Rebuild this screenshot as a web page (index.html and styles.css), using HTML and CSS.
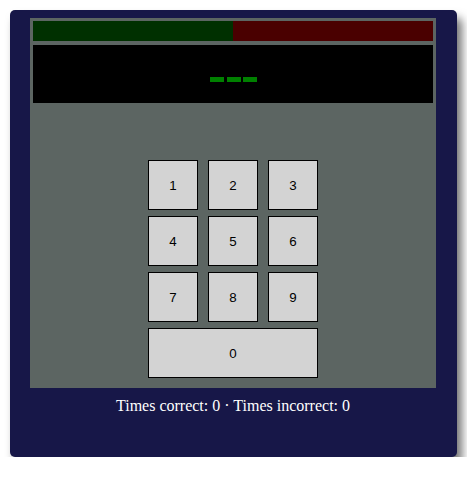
FILE: index.html
```html
<!DOCTYPE html>
<html>
<head>
<meta charset="utf-8">
<link rel="stylesheet" href="styles.css">
</head>
<body>
<div class="card">
  <div class="panel">
    <div class="bar">
      <div class="bar-good"></div>
      <div class="bar-bad"></div>
    </div>
    <div class="display">
      <span class="dash"></span><span class="dash"></span><span class="dash"></span>
    </div>
    <div class="keypad">
      <button class="key">1</button>
      <button class="key">2</button>
      <button class="key">3</button>
      <button class="key">4</button>
      <button class="key">5</button>
      <button class="key">6</button>
      <button class="key">7</button>
      <button class="key">8</button>
      <button class="key">9</button>
      <button class="key key-wide">0</button>
    </div>
  </div>
  <p class="score">Times correct: 0 · Times incorrect: 0</p>
</div>
</body>
</html>
```
FILE: styles.css
```css
html, body {
  margin: 0;
  padding: 0;
  background: #ffffff;
}
.card {
  margin: 10px 0 0 10px;
  width: 447px;
  height: 447px;
  box-sizing: border-box;
  padding: 8px 21px 0 20px;
  background: #171748;
  border-radius: 5px;
  box-shadow: 5px 8px 10px rgba(0, 0, 0, 0.55);
}
.panel {
  width: 406px;
  height: 370px;
  box-sizing: border-box;
  padding: 3px;
  background: #5c6562;
  display: flex;
  flex-direction: column;
}
.bar {
  display: flex;
  height: 20px;
}
.bar-good {
  width: 200px;
  background: #003000;
}
.bar-bad {
  width: 200px;
  background: #4a0000;
}
.display {
  margin-top: 4px;
  height: 58px;
  box-sizing: border-box;
  padding-top: 32px;
  background: #000000;
  display: flex;
  justify-content: center;
  align-items: flex-start;
  gap: 2.6px;
  padding-left: 1px;
}
.dash {
  width: 14px;
  height: 5px;
  background: #008000;
}
.keypad {
  margin: 57px auto 0;
  display: grid;
  grid-template-columns: 50px 50px 50px;
  grid-auto-rows: 50px;
  column-gap: 10px;
  row-gap: 6px;
}
.key {
  margin: 0;
  padding: 0;
  border: 1px solid #000000;
  border-radius: 0;
  background: #d3d3d3;
  color: #000000;
  font-family: "Liberation Sans", Arial, sans-serif;
  font-size: 13.333px;
}
.key-wide {
  grid-column: 1 / 4;
}
.score {
  margin: 9px 0 0;
  text-align: center;
  color: #ffffff;
  font-family: "Liberation Serif", "Times New Roman", serif;
  font-size: 16px;
  line-height: 18px;
}
```
